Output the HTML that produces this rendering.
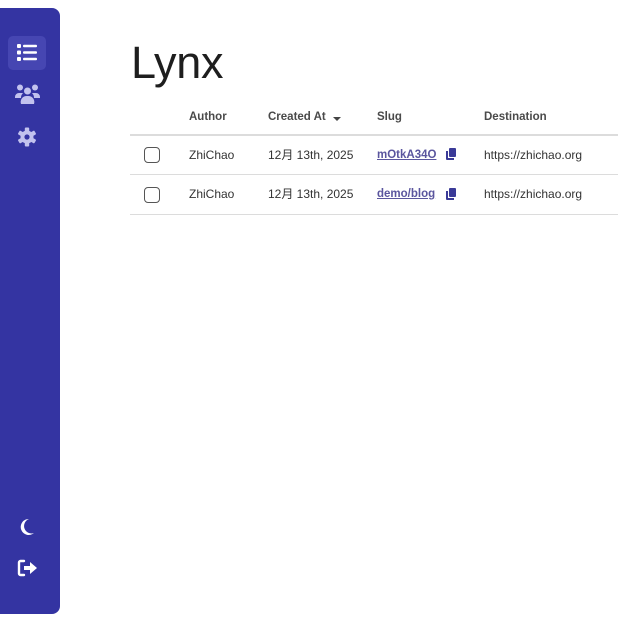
<!DOCTYPE html>
<html><head><meta charset="utf-8"><style>
*{margin:0;padding:0;box-sizing:border-box}
body{width:618px;height:618px;background:#fff;font-family:"Liberation Sans","Noto Sans CJK SC",sans-serif;position:relative;overflow:hidden;color:#333}
.sb{position:absolute;left:0;top:8px;width:60px;height:606px;background:#3434a2;border-radius:0 8px 8px 0}
.act{position:absolute;left:8px;top:36px;width:38px;height:34px;background:#4646b2;border-radius:5px}
.ic{position:absolute}
h1{position:absolute;left:131px;top:37px;font-size:45px;font-weight:400;color:#1e1e1e;letter-spacing:-0.3px}
.t{position:absolute;font-size:12px;line-height:14px;height:14px;white-space:nowrap}
.h{font-weight:bold;color:#4a4a4a;font-size:11.5px}
.line{position:absolute;left:130px;width:488px;background:#dcdcdc;height:1px}
.cb{position:absolute;left:144px;width:16px;height:16px;border:1.3px solid #555;border-radius:4px}
.lk{color:#5a559e;font-weight:bold;text-decoration:underline;font-size:11.5px}
</style></head><body>
<div class="sb"></div>
<div class="act"></div>
<svg class="ic" style="left:17px;top:44px" width="20" height="17" viewBox="0 0 20 17" fill="#fff">
<rect x="0" y="0" width="4" height="4" rx="1"/><rect x="0" y="6.5" width="4" height="4" rx="1"/><rect x="0" y="13" width="4" height="4" rx="1"/>
<rect x="6" y="0.8" width="14" height="2.4" rx="1"/><rect x="6" y="7.3" width="14" height="2.4" rx="1"/><rect x="6" y="13.8" width="14" height="2.4" rx="1"/></svg>
<svg class="ic" style="left:15px;top:84px" width="25" height="22" viewBox="0 0 25 22" fill="#c2c2ee">
<circle cx="5" cy="3.5" r="3"/><circle cx="20" cy="3.5" r="3"/><circle cx="12.5" cy="7" r="3.5"/>
<path d="M0 13a4 4 0 0 1 4-4h3a4 4 0 0 1 1 .2A6 6 0 0 0 6 14H0z"/><path d="M25 13a4 4 0 0 0-4-4h-3a4 4 0 0 0-1 .2A6 6 0 0 1 19 14h6z"/>
<path d="M6 20a6 6 0 0 1 6-8h1a6 6 0 0 1 6 8z"/></svg>
<svg class="ic" style="left:17px;top:127px" width="20" height="20" viewBox="0 0 20 20"><g fill="#c2c2ee"><circle cx="10" cy="10" r="6.5"/>
<g transform="translate(10 10)"><rect x="-2.2" y="-9.5" width="4.4" height="5" rx="1"/><rect x="-2.2" y="-9.5" width="4.4" height="5" rx="1" transform="rotate(60)"/><rect x="-2.2" y="-9.5" width="4.4" height="5" rx="1" transform="rotate(120)"/><rect x="-2.2" y="-9.5" width="4.4" height="5" rx="1" transform="rotate(180)"/><rect x="-2.2" y="-9.5" width="4.4" height="5" rx="1" transform="rotate(240)"/><rect x="-2.2" y="-9.5" width="4.4" height="5" rx="1" transform="rotate(300)"/></g></g>
<circle cx="10" cy="10" r="2.6" fill="#3434a2"/></svg>
<svg class="ic" style="left:19px;top:518px" width="16" height="18" viewBox="0 0 16 18"><path d="M10 1A8 8 0 1 0 15 15 6.5 6.5 0 0 1 10 1z" fill="#fff"/></svg>
<svg class="ic" style="left:17px;top:559px" width="22" height="18" viewBox="0 0 22 18"><path d="M7 2H3.5A1.5 1.5 0 0 0 2 3.5v11A1.5 1.5 0 0 0 3.5 16H7" stroke="#fff" stroke-width="2.4" fill="none" stroke-linecap="round"/><path d="M7 7h6V3l7 6-7 6v-4H7z" fill="#fff"/></svg>
<h1>Lynx</h1>
<div class="t h" style="left:189px;top:110px">Author</div>
<div class="t h" style="left:268px;top:110px">Created At</div>
<svg class="ic" style="left:333px;top:117px" width="8" height="5"><path d="M0 0h8L4 4z" fill="#444"/></svg>
<div class="t h" style="left:377px;top:110px">Slug</div>
<div class="t h" style="left:484px;top:110px">Destination</div>
<div class="line" style="top:134px;height:2px"></div>
<div class="line" style="top:174px"></div>
<div class="line" style="top:214px"></div>
<div class="cb" style="top:147px"></div>
<div class="cb" style="top:187px"></div>
<div class="t" style="left:189px;top:148px">ZhiChao</div>
<div class="t" style="left:268px;top:148px">12月 13th, 2025</div>
<div class="t lk" style="left:377px;top:148px">mOtkA34O</div>
<div class="t" style="left:484px;top:148px">https://zhichao.org</div>
<div class="t" style="left:189px;top:187px">ZhiChao</div>
<div class="t" style="left:268px;top:187px">12月 13th, 2025</div>
<div class="t lk" style="left:377px;top:187px">demo/blog</div>
<div class="t" style="left:484px;top:187px">https://zhichao.org</div>
<svg class="ic" style="left:446px;top:148px" width="10" height="12" viewBox="0 0 10 12"><rect x="3" y="0" width="7" height="9" rx="1" fill="#3a3a98"/><path d="M0 3h2v7h6v2H1a1 1 0 0 1-1-1z" fill="#3a3a98"/></svg>
<svg class="ic" style="left:446px;top:188px" width="10" height="12" viewBox="0 0 10 12"><rect x="3" y="0" width="7" height="9" rx="1" fill="#3a3a98"/><path d="M0 3h2v7h6v2H1a1 1 0 0 1-1-1z" fill="#3a3a98"/></svg>
</body></html>
